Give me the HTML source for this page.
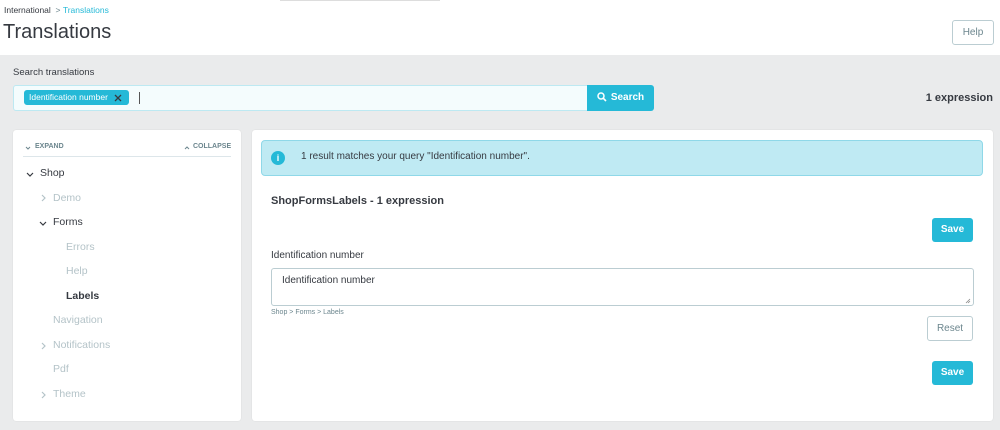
<!DOCTYPE html>
<html><head><meta charset="utf-8"><style>
*{box-sizing:border-box;margin:0;padding:0}
body{width:1000px;height:430px;overflow:hidden;font-family:"Liberation Sans",sans-serif;background:#eaebec;position:relative;color:#363a41}
.top{position:absolute;left:0;top:0;width:1000px;height:55px;background:#fff}
.abs{position:absolute;white-space:nowrap}
.panel{position:absolute;background:#fff;border-radius:3px;box-shadow:0 0 1px rgba(0,0,0,.15)}
.btn{position:absolute;border-radius:3px;font-size:10px;font-weight:bold;text-align:center}
.save{background:#25b9d7;color:#fff}
.tree{font-size:10.5px;color:#b4c3c8}
svg{display:block}
.chev{position:absolute}
</style></head><body>
<div class="top"></div>
<div class="abs" style="left:280px;top:0;width:160px;height:1px;background:#ddd"></div>
<div class="abs" style="left:4px;top:5px;font-size:8.5px;color:#363a41">International <span style="color:#6c868e">&nbsp;&gt;&nbsp;</span><span style="color:#25b9d7">Translations</span></div>
<div class="abs" style="left:3px;top:21px;font-size:20px;color:#363a41">Translations</div>
<div class="btn" style="left:952px;top:20px;width:42px;height:25px;border:1px solid #bbcdd2;color:#6c868e;line-height:23px;font-weight:normal">Help</div>

<div class="abs" style="left:13px;top:67px;font-size:9.5px;color:#363a41">Search translations</div>
<div class="abs" style="left:13px;top:85px;width:575px;height:26px;background:#f4fcfd;border:1px solid #bde9f2;border-radius:3px 0 0 3px"></div>
<div class="abs" style="left:24px;top:90px;width:105px;height:15px;background:#25b9d7;border-radius:3px;color:#fff;font-size:8.5px;line-height:15px;padding-left:5px">Identification number</div>
<svg class="chev" style="left:114px;top:94px" width="8" height="8"><path d="M1 1L7 7M7 1L1 7" stroke="#363a41" stroke-width="1.3"/></svg>
<div class="abs" style="left:139px;top:92px;width:1px;height:12px;background:#555"></div>
<div class="btn save" style="left:587px;top:85px;width:67px;height:26px;line-height:26px;border-radius:0 3px 3px 0">
<span style="display:inline-block;vertical-align:middle;margin-right:4px"><svg width="10" height="10" viewBox="0 0 10 10"><circle cx="4" cy="4" r="3" stroke="#fff" stroke-width="1.5" fill="none"/><path d="M6.2 6.2L9 9" stroke="#fff" stroke-width="1.6"/></svg></span>Search</div>
<div class="abs" style="right:7px;top:92px;font-size:11px;font-weight:bold;color:#363a41">1 expression</div>

<div class="panel" style="left:13px;top:130px;width:228px;height:291px"></div>
<svg class="chev" style="left:25px;top:146px" width="6" height="4"><path d="M1 1L3 3L5 1" stroke="#6c868e" fill="none"/></svg>
<div class="abs" style="left:35px;top:143px;font-size:7px;font-weight:bold;color:#6c868e">EXPAND</div>
<svg class="chev" style="left:184px;top:146px" width="6" height="4"><path d="M1 3L3 1L5 3" stroke="#6c868e" fill="none"/></svg>
<div class="abs" style="left:193px;top:143px;font-size:7px;font-weight:bold;color:#6c868e">COLLAPSE</div>
<div class="abs" style="left:23px;top:156px;width:208px;height:1px;background:#dde6ea"></div>

<svg class="chev" style="left:26px;top:172px" width="8" height="6"><path d="M1 1L4 4L7 1" stroke="#363a41" stroke-width="1.2" fill="none"/></svg>
<div class="abs tree" style="left:40px;top:167px;color:#363a41">Shop</div>
<svg class="chev" style="left:41px;top:194px" width="6" height="8"><path d="M1 1L4 4L1 7" stroke="#b4c3c8" stroke-width="1.2" fill="none"/></svg>
<div class="abs tree" style="left:53px;top:192px">Demo</div>
<svg class="chev" style="left:39px;top:221px" width="8" height="6"><path d="M1 1L4 4L7 1" stroke="#363a41" stroke-width="1.2" fill="none"/></svg>
<div class="abs tree" style="left:53px;top:216px;color:#363a41">Forms</div>
<div class="abs tree" style="left:66px;top:241px">Errors</div>
<div class="abs tree" style="left:66px;top:265px">Help</div>
<div class="abs tree" style="left:66px;top:290px;color:#363a41;font-weight:bold">Labels</div>
<div class="abs tree" style="left:53px;top:314px">Navigation</div>
<svg class="chev" style="left:41px;top:342px" width="6" height="8"><path d="M1 1L4 4L1 7" stroke="#b4c3c8" stroke-width="1.2" fill="none"/></svg>
<div class="abs tree" style="left:53px;top:339px">Notifications</div>
<div class="abs tree" style="left:53px;top:363px">Pdf</div>
<svg class="chev" style="left:41px;top:391px" width="6" height="8"><path d="M1 1L4 4L1 7" stroke="#b4c3c8" stroke-width="1.2" fill="none"/></svg>
<div class="abs tree" style="left:53px;top:388px">Theme</div>

<div class="panel" style="left:252px;top:130px;width:741px;height:291px"></div>
<div class="abs" style="left:261px;top:140px;width:722px;height:36px;background:#bfeaf3;border:1px solid #8fd8e8;border-radius:4px"></div>
<div class="abs" style="left:271px;top:151px;width:14px;height:14px;border-radius:50%;background:#25b9d7;color:#fff;font-size:9px;font-weight:bold;text-align:center;line-height:14px">i</div>
<div class="abs" style="left:301px;top:151px;font-size:10px;color:#363a41">1 result matches your query "Identification number".</div>
<div class="abs" style="left:271px;top:195px;font-size:11px;font-weight:bold;color:#363a41">ShopFormsLabels - 1 expression</div>
<div class="btn save" style="left:932px;top:218px;width:41px;height:24px;line-height:24px">Save</div>
<div class="abs" style="left:271px;top:250px;font-size:10px;color:#363a41">Identification number</div>
<div class="abs" style="left:271px;top:268px;width:703px;height:38px;border:1px solid #bbcdd2;border-radius:3px;background:#fff"></div>
<div class="abs" style="left:282px;top:275px;font-size:10px;color:#363a41">Identification number</div>
<svg class="chev" style="left:965px;top:298px" width="6" height="6"><path d="M1 5L5 1M3 5L5 3" stroke="#888" stroke-width=".8"/></svg>
<div class="abs" style="left:271px;top:309px;font-size:7px;color:#6c868e">Shop &gt; Forms &gt; Labels</div>
<div class="btn" style="left:927px;top:316px;width:46px;height:25px;border:1px solid #bbcdd2;color:#6c868e;line-height:23px;font-weight:normal">Reset</div>
<div class="btn save" style="left:932px;top:361px;width:41px;height:24px;line-height:24px">Save</div>
</body></html>
